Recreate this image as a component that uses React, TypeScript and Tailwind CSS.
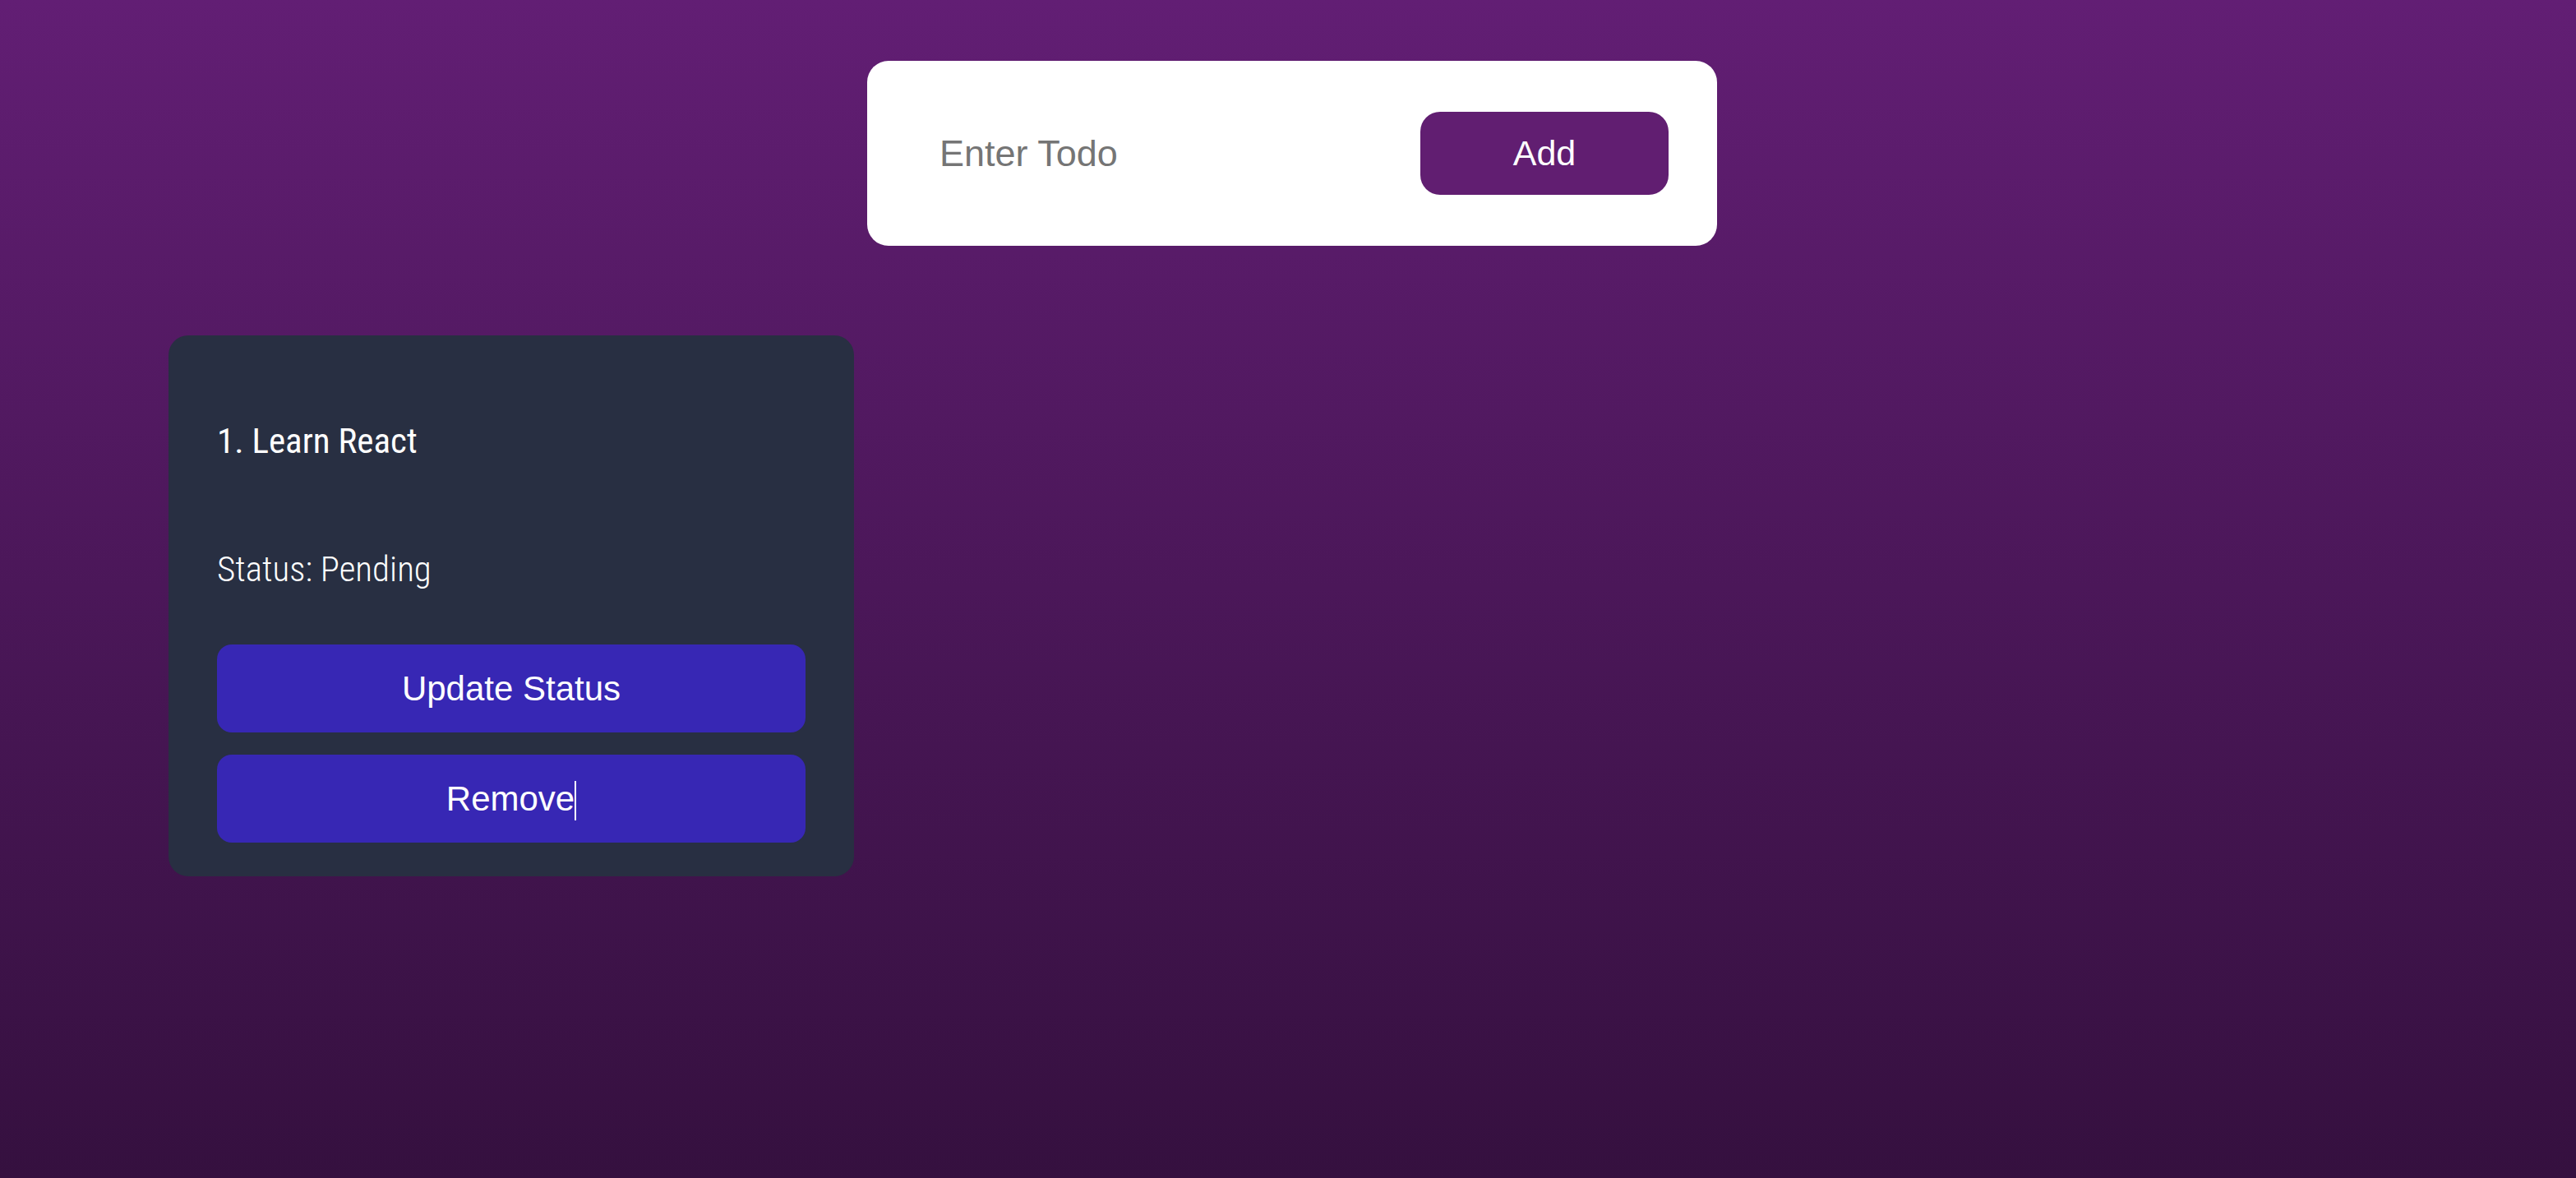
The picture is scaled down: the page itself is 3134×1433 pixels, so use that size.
import { useState } from 'react';

interface Todo {
  id: number;
  title: string;
  done: boolean;
}

export default function App() {
  const [text, setText] = useState('');
  const [todos, setTodos] = useState<Todo[]>([{ id: 1, title: 'Learn React', done: false }]);

  const addTodo = () => {
    if (!text.trim()) return;
    setTodos([...todos, { id: Date.now(), title: text, done: false }]);
    setText('');
  };

  return (
    <div className="min-h-screen w-full bg-linear-to-b from-[#621e74] to-[#35103f] font-['Liberation_Sans',Arial,sans-serif]">
      {/* barra de entrada */}
      <div className="flex justify-center pt-[74px] pl-[10px]">
        <div className="flex w-[1034px] h-[225px] items-center gap-6 rounded-[26px] bg-white pl-[60px] pr-[59px]">
          <input
            value={text}
            onChange={(e) => setText(e.target.value)}
            placeholder="Enter Todo"
            className="flex-1 min-w-0 bg-transparent pl-[28px] text-[45px] text-black outline-none placeholder:text-[#757575]"
          />
          <button
            onClick={addTodo}
            className="w-[302px] h-[101px] shrink-0 rounded-[24px] bg-[#611e71] text-[43px] text-white"
          >
            Add
          </button>
        </div>
      </div>

      {/* lista de tareas */}
      <div className="flex flex-wrap gap-10 px-[205px] pt-[109px]">
        {todos.map((todo, i) => (
          <div key={todo.id} className="w-[834px] rounded-[24px] bg-[#282f42] px-[59px] pt-[107px] pb-[41px]">
            <h3 className="font-['Roboto_Condensed',Roboto,sans-serif] text-[43px] leading-none font-normal text-white">
              {i + 1}. {todo.title}
            </h3>
            <p className="mt-[113px] font-['Roboto_Condensed',Roboto,sans-serif] text-[43px] leading-none font-light text-white">
              Status: {todo.done ? 'Completed' : 'Pending'}
            </p>
            <div className="mt-[70px] flex flex-col gap-[27px]">
              <button
                onClick={() => setTodos(todos.map((t) => (t.id === todo.id ? { ...t, done: !t.done } : t)))}
                className="h-[107px] w-full rounded-[18px] bg-[#3727b4] text-[42px] text-white"
              >
                Update Status
              </button>
              <button
                onClick={() => setTodos(todos.filter((t) => t.id !== todo.id))}
                className="h-[107px] w-full rounded-[18px] bg-[#3727b4] text-[42px] text-white"
              >
                Remove<span className="inline-block w-[2px] h-[48px] bg-white align-[-12px]" />
              </button>
            </div>
          </div>
        ))}
      </div>
    </div>
  );
}
